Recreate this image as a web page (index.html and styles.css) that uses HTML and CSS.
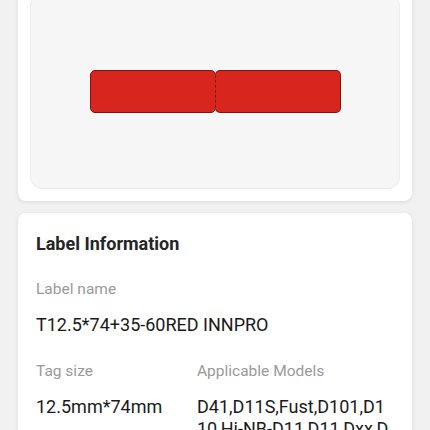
FILE: index.html
```html
<!DOCTYPE html>
<html>
<head>
<meta charset="utf-8">
<link rel="stylesheet" href="styles.css">
</head>
<body>
<div class="page">
  <section class="card preview-card">
    <div class="preview">
      <div class="tape">
        <div class="label"></div>
        <div class="label"></div>
      </div>
    </div>
  </section>
  <section class="card info-card">
    <h2 class="title">Label Information</h2>
    <div class="field">
      <div class="key">Label name</div>
      <div class="val">T12.5*74+35-60RED INNPRO</div>
    </div>
    <div class="grid">
      <div class="field">
        <div class="key">Tag size</div>
        <div class="val">12.5mm*74mm</div>
      </div>
      <div class="field">
        <div class="key">Applicable Models</div>
        <div class="val models">D41,D11S,Fust,D101,D110,Hi-NB-D11,D11,Dxx,D11_H</div>
      </div>
    </div>
  </section>
</div>
</body>
</html>
```

FILE: styles.css
```css
html, body {
  margin: 0;
  padding: 0;
  background: #f1f1f1;
  overflow: hidden;
}
body {
  font-family: Roboto, "Liberation Sans", sans-serif;
}
.page {
  margin-top: -18px;
  padding: 0 18px;
  display: flex;
  flex-direction: column;
  gap: 12px;
}
.card {
  background: #ffffff;
  border-radius: 8px;
  box-shadow: 0 1px 4px rgba(0,0,0,0.10);
}
.preview-card {
  padding: 12px;
}
.preview {
  height: 193px;
  background: #f6f6f6;
  border: 1px solid #ececec;
  border-radius: 12px;
  display: flex;
  align-items: center;
  justify-content: center;
}
.tape {
  display: flex;
}
.label {
  width: 124px;
  height: 41px;
  background: #d8251d;
  border: 1px solid #7a1812;
  border-radius: 5px;
}
.label + .label {
  border-left: 1px dashed #7a1812;
  margin-left: -1px;
}
.info-card {
  padding: 19px 18px 0 18px;
  height: 260px;
}
.title {
  margin: 0;
  font-size: 18px;
  font-weight: 700;
  color: #252525;
  line-height: 24px;
}
.field {
  margin-top: 22px;
}
.grid .field {
  margin-top: 24px;
}
.key {
  font-size: 15.5px;
  color: #9a9a9a;
  line-height: 22px;
}
.val {
  margin-top: 14px;
  font-size: 18px;
  color: #1a1a1a;
  line-height: 22px;
}
.grid {
  display: grid;
  grid-template-columns: 161px 1fr;
}
.models {
  word-break: break-all;
}
```
